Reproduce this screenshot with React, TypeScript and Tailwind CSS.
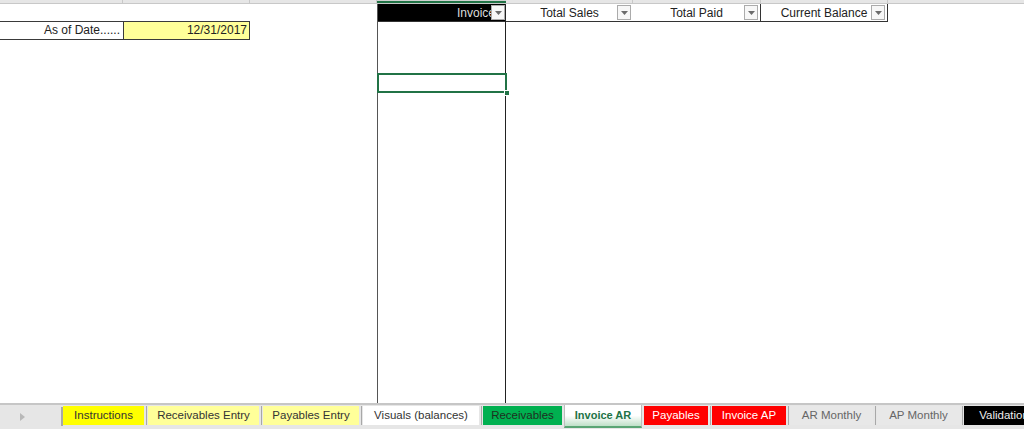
import React from 'react';

// Small filter button shown on the table header cells
function FilterButton({ className }: { className: string }) {
    return (
        <span className={`absolute top-[1px] w-[14px] h-[15px] bg-[#f7f7f7] border border-[#ababab] flex items-center justify-center ${className}`}>
            <svg width="7" height="4" viewBox="0 0 7 4">
                <path d="M0 0 L7 0 L3.5 4 Z" fill="#6b6b6b" />
            </svg>
        </span>
    );
}

type Tab = {
    name: string;
    width: string;
    style: string;
};

const tabs: Tab[] = [
    { name: "Instructions", width: "w-[81px]", style: "bg-[#ffff00] text-[#333]" },
    { name: "Receivables Entry", width: "w-[111px]", style: "bg-[#ffff99] text-[#333]" },
    { name: "Payables Entry", width: "w-[96px]", style: "bg-[#ffff99] text-[#333]" },
    { name: "Visuals (balances)", width: "w-[116px]", style: "bg-white text-[#333]" },
    { name: "Receivables", width: "w-[79px]", style: "bg-[#00b050] text-[#1f2f1f]" },
    { name: "Invoice AR", width: "w-[78px]", style: "active" },
    { name: "Payables", width: "w-[64px]", style: "bg-[#ff0000] text-white" },
    { name: "Invoice AP", width: "w-[74px]", style: "bg-[#ff0000] text-white" },
    { name: "AR Monthly", width: "w-[83px]", style: "bg-[#e8e8e8] text-[#666]" },
    { name: "AP Monthly", width: "w-[83px]", style: "bg-[#e8e8e8] text-[#666]" },
    { name: "Validation", width: "w-[80px]", style: "bg-black text-[#eee]" },
];

function App() {
    return (
        <div className="w-[1024px] h-[429px] overflow-hidden bg-white flex flex-col font-['Liberation_Sans',Arial,sans-serif] text-[12px] text-[#222]">
            {/* Column header strip, mostly scrolled off */}
            <div className="h-[4px] flex bg-[#e6e6e6] border-b border-[#c8c8c8] shrink-0">
                <div className="w-[123px] border-r border-[#c8c8c8]" />
                <div className="w-[127px] border-r border-[#c8c8c8]" />
                <div className="w-[127px] border-r border-[#c8c8c8]" />
                <div className="w-[129px] bg-[#d2d2d2] border-b-2 border-[#217346]" />
                <div className="w-[127px] border-r border-[#c8c8c8]" />
                <div className="w-[128px] border-r border-[#c8c8c8]" />
                <div className="w-[127px] border-r border-[#c8c8c8]" />
                <div className="flex-1" />
            </div>

            {/* Sheet body */}
            <div className="flex-1 flex">
                {/* Columns A-B */}
                <div className="w-[250px] flex flex-col">
                    <div className="h-[17px]" />
                    <div className="h-[19px] flex border-y border-[#3a3a3a]">
                        <div className="w-[123px] text-right pr-[3px] leading-[17px]">As of Date......</div>
                        <div className="w-[127px] bg-[#ffff99] border-x border-[#3a3a3a] text-right pr-[2px] leading-[17px]">12/31/2017</div>
                    </div>
                </div>

                {/* Column C */}
                <div className="w-[127px]" />

                {/* Column D, the Invoice column */}
                <div className="w-[129px] relative border-l border-[#555] border-r border-r-[#222] flex flex-col">
                    <div className="h-[18px] bg-black border-b border-[#333] relative overflow-hidden flex items-center justify-end pr-[10px] text-[#dcdcdc]">
                        Invoice
                        <FilterButton className="right-[0px]" />
                    </div>
                    {/* Selected cell */}
                    <div className="absolute left-[-1px] right-[-2px] top-[69px] h-[20px] border-2 border-[#217346]">
                        <span className="absolute right-[-5px] bottom-[-5px] w-[6px] h-[6px] bg-[#217346] border border-white" />
                    </div>
                </div>

                {/* Columns E-G, header cells */}
                <div className="flex items-start">
                    <div className="w-[127px] h-[18px] border-b border-[#333] relative flex items-center justify-center">
                        Total Sales
                        <FilterButton className="right-[2px]" />
                    </div>
                    <div className="w-[128px] h-[18px] border-b border-r border-[#333] relative flex items-center justify-center">
                        Total Paid
                        <FilterButton className="right-[2px]" />
                    </div>
                    <div className="w-[127px] h-[18px] border-b border-r border-[#333] relative flex items-center justify-center">
                        Current Balance
                        <FilterButton className="right-[2px]" />
                    </div>
                </div>
            </div>

            {/* Sheet tab bar */}
            <div className="h-[26px] shrink-0 bg-[#e6e6e6] border-t-2 border-[#c6c6c6] flex items-start text-[11.5px]">
                <div className="w-[61px] h-[21px] mt-[1px] flex items-center pl-[20px] shrink-0">
                    <svg width="5" height="8" viewBox="0 0 5 8">
                        <path d="M0 0 L5 4 L0 8 Z" fill="#b8b8b8" />
                    </svg>
                </div>
                <div className="w-[2px] h-[19px] mt-[2px] bg-[#a8a8a8] shrink-0" />
                {tabs.map((tab, i) => (
                    <React.Fragment key={tab.name}>
                        {tab.style === "active" ? (
                            <div className={`${tab.width} h-[23px] bg-linear-to-b from-white via-white to-[#bfe0c8] border-b-2 border-[#5aa574] border-x border-x-[#bdbdbd] flex items-center justify-center font-bold text-[11px] text-[#217346] shrink-0`}>
                                {tab.name}
                            </div>
                        ) : (
                            <div className={`${tab.width} h-[19px] mt-[1px] flex items-center justify-center shrink-0 ${tab.style}`}>
                                {tab.name}
                            </div>
                        )}
                        {i < tabs.length - 1 && tabs[i + 1].style !== "active" && tab.style !== "active" && (
                            <div className="w-[4px] h-[19px] mt-[1px] flex justify-center shrink-0">
                                <div className="w-[1px] h-full bg-[#a8a8a8]" />
                            </div>
                        )}
                        {(tabs[i + 1]?.style === "active" || tab.style === "active") && <div className="w-[2px] shrink-0" />}
                    </React.Fragment>
                ))}
            </div>
        </div>
    );
}

export default App
